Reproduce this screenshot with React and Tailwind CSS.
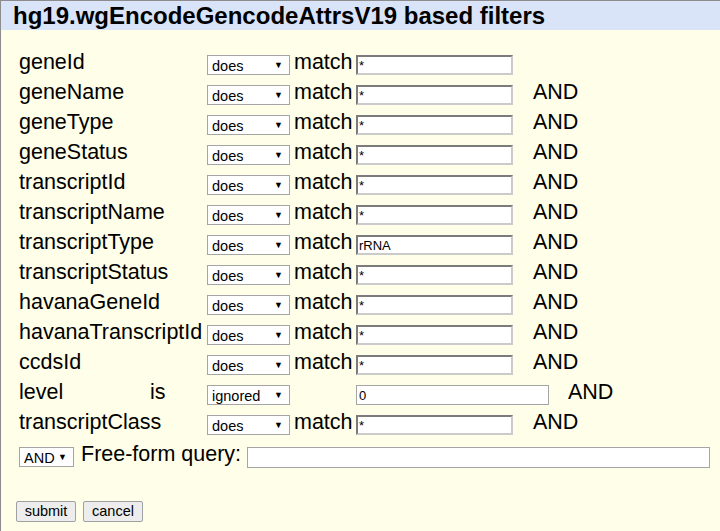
import React from 'react';

const ROWS = [
  { name: 'geneId', value: '*', and: false },
  { name: 'geneName', value: '*', and: true },
  { name: 'geneType', value: '*', and: true },
  { name: 'geneStatus', value: '*', and: true },
  { name: 'transcriptId', value: '*', and: true },
  { name: 'transcriptName', value: '*', and: true },
  { name: 'transcriptType', value: 'rRNA', and: true },
  { name: 'transcriptStatus', value: '*', and: true },
  { name: 'havanaGeneId', value: '*', and: true },
  { name: 'havanaTranscriptId', value: '*', and: true },
  { name: 'ccdsId', value: '*', and: true },
  { name: 'level', numeric: true, value: '0', and: true },
  { name: 'transcriptClass', value: '*', and: true },
];

// fake native select box: white box, grey border, small arrow
function Picker({ label, width = 'w-[83px]' }) {
  return (
    <div className={`relative ${width} h-[20px] bg-white border border-[#a5a5a5] flex items-center pl-[4px] text-[14.5px] leading-none text-black shrink-0`}>
      <span className="pt-[2px]">{label}</span>
      <span className="absolute right-[6px] top-[5px] text-[9px] leading-none">▼</span>
    </div>
  );
}

function FilterRow({ row }) {
  return (
    <div className="flex items-center h-[30px]">
      <div className="w-[131px] shrink-0 whitespace-nowrap pb-[4px]">{row.name}</div>
      <div className="w-[57px] shrink-0 pb-[4px]">{row.numeric ? 'is' : ''}</div>
      <Picker label={row.numeric ? 'ignored' : 'does'} />
      {row.numeric ? (
        <>
          <div className="w-[66px] shrink-0" />
          <div className="w-[193px] h-[20px] shrink-0 bg-white border border-[#a5a5a5] flex items-center pl-[2px] text-[13px] leading-none">
            {row.value}
          </div>
          {row.and && <div className="ml-[19px] pb-[4px]">AND</div>}
        </>
      ) : (
        <>
          <div className="ml-[4px] w-[58px] shrink-0 pb-[4px]">match</div>
          <div className="ml-[4px] w-[157px] h-[20px] shrink-0 bg-white border-2 border-t-[#7b7b7b] border-l-[#7b7b7b] border-b-[#cbcbcb] border-r-[#cbcbcb] flex items-center pl-[1px] text-[13px] leading-none">
            {row.value}
          </div>
          {row.and && <div className="ml-[20px] pb-[4px]">AND</div>}
        </>
      )}
    </div>
  );
}

export default function App() {
  return (
    <div className="w-[720px] h-[531px] overflow-hidden bg-[#fffee8] border-t border-l border-[#8c8c8c] font-['Liberation_Sans',Arial,sans-serif] text-black">
      {/* HEADER */}
      <div className="h-[29px] bg-[#d9e4f8] flex items-center pl-[12px] text-[24px] font-bold leading-none">
        hg19.wgEncodeGencodeAttrsV19 based filters
      </div>

      {/* FILTER TABLE */}
      <div className="pt-[20px] pl-[18px] text-[21.5px] leading-none">
        {ROWS.map((r) => (
          <FilterRow key={r.name} row={r} />
        ))}

        <div className="flex items-center h-[34px]">
          <Picker label="AND" width="w-[55px]" />
          <div className="ml-[7px] pb-[4px]">Free-form query:</div>
          <div className="ml-[6px] w-[463px] h-[21px] bg-white border border-[#a5a5a5]" />
        </div>
      </div>

      {/* BUTTONS */}
      <div className="flex gap-[7px] pl-[15px] mt-[27px]">
        <button className="w-[60px] h-[21px] bg-[#ededed] border border-[#a0a0a0] rounded-[2px] text-[14.5px] leading-none">
          submit
        </button>
        <button className="w-[60px] h-[21px] bg-[#ededed] border border-[#a0a0a0] rounded-[2px] text-[14.5px] leading-none">
          cancel
        </button>
      </div>
    </div>
  );
}
